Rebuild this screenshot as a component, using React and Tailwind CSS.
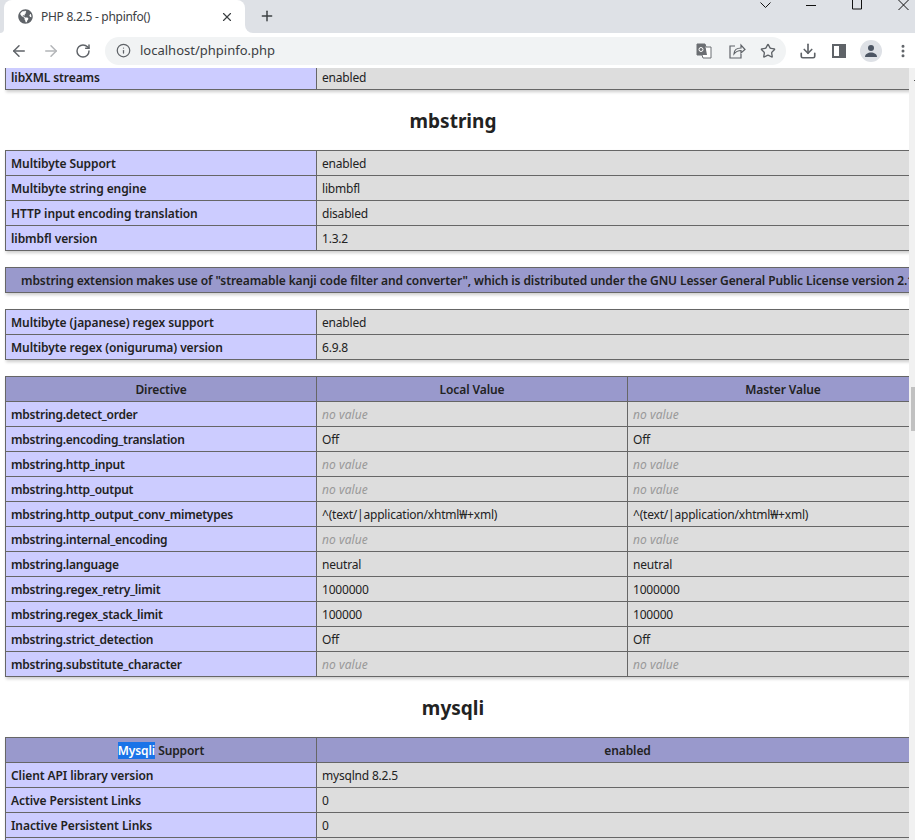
import React from 'react';
import { ArrowLeft, ArrowRight, RotateCw, Info, Star, Plus, X, Download, MoreVertical } from 'lucide-react';
import { FaGlobeAmericas } from 'react-icons/fa';

const cellBase = 'border border-[#666] align-baseline px-[5px] pt-[5px] pb-[3px] text-[12px] leading-[16px]';

const E = ({ children, name }) => <td className={`${cellBase} bg-[#ccf] w-[311px] font-semibold whitespace-nowrap ${name ? 'tracking-[-0.23px]' : 'tracking-[-0.08px]'}`}>{children}</td>;
const V = ({ children }) => <td className={`${cellBase} bg-[#ddd] tracking-[-0.2px] whitespace-nowrap`}>{children}</td>;
const H = ({ children, span }) => <th colSpan={span} className={`${cellBase} bg-[#99c] font-semibold tracking-[-0.1px] text-center whitespace-nowrap overflow-hidden`}>{children}</th>;
const NoValue = () => <i className="text-[#999] tracking-[0.05px]">no value</i>;

const Table = ({ children, three, className = '' }) => (
    <table className={`border-collapse table-fixed w-[934px] shadow-[1px_2px_3px_rgba(0,0,0,0.2)] ${className}`}>
        <colgroup>
            <col className="w-[311px]" />
            <col className={three ? 'w-[311px]' : ''} />
            {three && <col />}
        </colgroup>
        <tbody>{children}</tbody>
    </table>
);

const directives = [
    ['mbstring.detect_order', null],
    ['mbstring.encoding_translation', 'Off'],
    ['mbstring.http_input', null],
    ['mbstring.http_output', null],
    ['mbstring.http_output_conv_mimetypes', '^(text/|application/xhtml₩+xml)'],
    ['mbstring.internal_encoding', null],
    ['mbstring.language', 'neutral'],
    ['mbstring.regex_retry_limit', '1000000'],
    ['mbstring.regex_stack_limit', '100000'],
    ['mbstring.strict_detection', 'Off'],
    ['mbstring.substitute_character', null],
];

const WindowControls = () => (
    <svg width="160" height="12" viewBox="0 0 160 12" fill="none" stroke="#111" strokeWidth="1" className="absolute top-0 left-[755px]">
        <path d="M5.500 2.500l5 5 5-5" />
        <path d="M51 5.500h10" />
        <path d="M97.500 -1h9v10h-9z" />
        <path d="M143.500 0l10 10M153.500 0l-10 10" />
    </svg>
);

const TabBar = () => (
    <div className="h-[33px] bg-white flex relative">
        <div className="w-[4px] bg-[#dee1e6] rounded-br-[6px]" />
        <div className="bg-[#dee1e6]">
            <div className="w-[241px] h-[33px] bg-white rounded-t-[8px] flex items-center pl-[14px] pr-[11px]">
                <FaGlobeAmericas size={15} color="#5f6368" className="shrink-0" />
                <span className="ml-[8px] text-[12px] tracking-[-0.28px] text-[#3c4043] whitespace-nowrap flex-1">PHP 8.2.5 - phpinfo()</span>
                <X size={14} strokeWidth={2} color="#3c4043" />
            </div>
        </div>
        <div className="flex-1 bg-[#dee1e6] rounded-bl-[8px]">
            <Plus size={16} strokeWidth={2.2} color="#3c4043" className="ml-[14px] mt-[8px]" />
        </div>
        <WindowControls />
    </div>
);

const Toolbar = () => (
    <div className="h-[35px] bg-white flex items-center">
        <ArrowLeft size={18} color="#5f6368" strokeWidth={2} className="ml-[10px]" />
        <ArrowRight size={18} color="#b3b5b8" strokeWidth={2} className="ml-[14px]" />
        <RotateCw size={16} color="#5f6368" strokeWidth={2.2} className="ml-[15px]" />
        <div className="ml-[14px] w-[681px] h-[28px] rounded-full bg-[#f1f3f4] flex items-center pl-[11px] pr-[10px]">
            <Info size={15} color="#5f6368" strokeWidth={2} />
            <span className="ml-[9px] text-[13px] text-[#3c4043] flex-1">localhost/phpinfo.php</span>
            <svg width="16" height="16" viewBox="0 0 16 16" className="mr-[16px]">
                <path d="M1 1h8l1 3h5v11H7l-1-3H1z" fill="#fff" stroke="#6b6e72" />
                <path d="M1 1h8l2 11H1z" fill="#6b6e72" />
                <circle cx="5" cy="6.500" r="2" fill="none" stroke="#fff" />
            </svg>
            <svg width="18" height="18" viewBox="0 0 18 18" fill="none" stroke="#5f6368" strokeWidth="1.2" className="mr-[14px]">
                <path d="M7 4H2v12h11v-4" />
                <path d="M6 12c0-4 3-6 7-6V3l4 4.500L13 11V8.500c-3 0-5 1-7 3.500z" />
            </svg>
            <Star size={16} color="#5f6368" strokeWidth={2} />
        </div>
        <Download size={18} color="#5f6368" strokeWidth={2.2} className="ml-[13px]" />
        <div className="ml-[15px] w-[14px] h-[14px] border-2 border-[#5f6368] flex justify-end">
            <div className="w-[5px] h-full bg-[#5f6368]" />
        </div>
        <div className="ml-[14px] w-[22px] h-[22px] rounded-full bg-[#dee1e6] flex items-center justify-center">
            <svg width="14" height="14" viewBox="0 0 14 14" fill="#4c5563">
                <circle cx="7" cy="4" r="3" />
                <path d="M1 13c0-3 3-4.500 6-4.500s6 1.500 6 4.500z" />
            </svg>
        </div>
        <MoreVertical size={16} color="#5f6368" strokeWidth={2.5} className="ml-[13px]" />
    </div>
);

export default function App() {
    return (
        <div className="w-[915px] h-[840px] overflow-hidden bg-white text-[#222] font-['Noto_Sans',sans-serif]">
            <TabBar />
            <Toolbar />
            <div className="flex h-[772px]">
                <div className="w-[904px] overflow-hidden pl-[5px] box-content">
                    <div className="-mt-[4px]">
                        <Table><tr><E>libXML streams</E><V>enabled</V></tr></Table>
                    </div>
                    <h2 className="text-[19px] leading-[26px] font-bold text-center w-[896px] mt-[18px] mb-[16px]">mbstring</h2>
                    <Table>
                        <tr><E>Multibyte Support</E><V>enabled</V></tr>
                        <tr><E>Multibyte string engine</E><V>libmbfl</V></tr>
                        <tr><E>HTTP input encoding translation</E><V>disabled</V></tr>
                        <tr><E>libmbfl version</E><V>1.3.2</V></tr>
                    </Table>
                    <Table className="mt-[16px]">
                        <tr><H span={2}><span className="block text-left pl-[10px]">mbstring extension makes use of "streamable kanji code filter and converter", which is distributed under the GNU Lesser General Public License version 2.1.</span></H></tr>
                    </Table>
                    <Table className="mt-[16px]">
                        <tr><E>Multibyte (japanese) regex support</E><V>enabled</V></tr>
                        <tr><E>Multibyte regex (oniguruma) version</E><V>6.9.8</V></tr>
                    </Table>
                    <Table three className="mt-[16px]">
                        <tr><H>Directive</H><H>Local Value</H><H>Master Value</H></tr>
                        {directives.map(([name, value]) => (
                            <tr key={name}>
                                <E name>{name}</E>
                                <V>{value ?? <NoValue />}</V>
                                <V>{value ?? <NoValue />}</V>
                            </tr>
                        ))}
                    </Table>
                    <h2 className="text-[19px] leading-[26px] font-bold text-center w-[896px] mt-[18px] mb-[16px]">mysqli</h2>
                    <Table>
                        <tr>
                            <H><span className="bg-[#1a73e8] text-white">Mysqli</span> Support</H>
                            <H>enabled</H>
                        </tr>
                        <tr><E>Client API library version</E><V>mysqlnd 8.2.5</V></tr>
                        <tr><E>Active Persistent Links</E><V>0</V></tr>
                        <tr><E>Inactive Persistent Links</E><V>0</V></tr>
                        <tr><E>Persistent Links</E><V>0</V></tr>
                    </Table>
                </div>
                <div className="w-[6px] bg-[#f1f1f1] flex flex-col items-end">
                    <div className="w-[1px] h-[1px] bg-[#555] mt-[12px]" />
                    <div className="w-[4px] h-[44px] bg-[#c1c1c1] mt-[306px]" />
                </div>
            </div>
        </div>
    );
}
